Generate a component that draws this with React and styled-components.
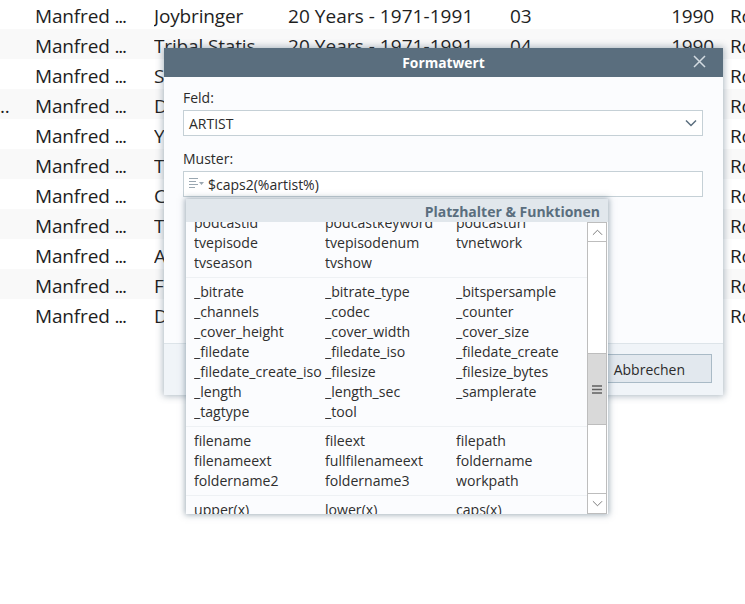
import React from 'react'
import styled, { createGlobalStyle } from 'styled-components'

const GlobalStyle = createGlobalStyle`
html, body {
  margin: 0;
  padding: 0;
  background: #FFFFFF;
  overflow: hidden;
}
body {
  width: 745px;
  height: 604px;
  position: relative;
  font-family: "Open Sans", "Noto Sans", sans-serif;
}
`

const Table = styled.div`
margin-top: -1px;
width: 745px;
overflow: hidden;
`
const Row = styled.div`
display: grid;
grid-template-columns: 35px 119px 134px 222px 100px 104px 31px;
height: 30px;
align-items: center;
font-size: 19px;
letter-spacing: -0.15px;
color: #1E1E1E;
background: ${p => (p.$striped ? '#F9F9F9' : '#FFFFFF')};
`
const Cell = styled.div`
white-space: nowrap;
overflow: hidden;
padding-top: 3px;
text-align: ${p => (p.$right ? 'right' : 'left')};
`
const AlbumCell = styled(Cell)`
letter-spacing: 0.05px;
`
const GenreCell = styled(Cell)`
padding-left: 16px;
`
const Dots = styled.span`
letter-spacing: -1.3px;
`

const Dialog = styled.div`
position: absolute;
left: 164px;
top: 48px;
width: 559px;
height: 347px;
display: flex;
flex-direction: column;
background: #FBFCFE;
box-shadow: 0 0 7px 1px rgba(70, 95, 115, 0.45);
`
const TitleBar = styled.div`
height: 29px;
flex: none;
display: flex;
align-items: center;
justify-content: center;
position: relative;
background: #5A6E7E;
color: #FFFFFF;
font-size: 13.8px;
font-weight: 700;
`
const CloseIcon = styled.svg`
position: absolute;
right: 17px;
top: 7px;
width: 13px;
height: 13px;
stroke: #D3DBE1;
stroke-width: 1.5;
fill: none;
`
const Body = styled.div`
flex: 1;
padding: 11px 20px 0 19px;
display: flex;
flex-direction: column;
`
const Label = styled.div`
height: 22px;
font-size: 14px;
line-height: 20px;
color: #2B2B2B;
`
const Field = styled.div`
height: 26px;
box-sizing: border-box;
border: 1px solid #C5D0D6;
background: #FFFFFF;
display: flex;
align-items: center;
justify-content: space-between;
padding: 0 5px;
margin-bottom: 13px;
font-size: 14px;
color: #2B2B2B;
`
const Pattern = styled.div`
display: flex;
align-items: center;
gap: 4px;
`
const Footer = styled.div`
height: 52px;
flex: none;
box-sizing: border-box;
border-top: 1px solid #DDE4E9;
background: #F0F4F8;
display: flex;
justify-content: flex-end;
padding: 10px 11px 0 0;
`
const Button = styled.div`
width: 112px;
height: 29px;
box-sizing: border-box;
border: 1px solid #A9BAC6;
background: #E2E8EE;
font-size: 14px;
color: #2B2B2B;
display: flex;
align-items: center;
justify-content: flex-end;
padding: 1px 26px 0 0;
`

const Popup = styled.div`
position: absolute;
left: 22px;
top: 151px;
width: 422px;
height: 315px;
display: flex;
flex-direction: column;
background: #FBFCFE;
box-shadow: 0 0 6px 1px rgba(70, 95, 115, 0.5);
`
const PopupHeader = styled.div`
height: 23px;
flex: none;
background: #E1E7EC;
color: #5A6E7E;
font-size: 14px;
font-weight: 700;
text-align: right;
line-height: 26px;
padding-right: 8px;
position: relative;
z-index: 1;
`
const PopupBody = styled.div`
flex: 1;
min-height: 0;
display: flex;
padding-right: 1px;
`
const ListViewport = styled.div`
width: 401px;
overflow: hidden;
`
const List = styled.div`
margin-top: -13px;
`
const Section = styled.div`
display: grid;
grid-template-columns: repeat(3, 131px);
grid-auto-rows: 20px;
align-items: center;
padding: 3px 8px 5px;
border-bottom: 1px solid #EEF1F4;
font-size: 14.1px;
color: #2F2F2F;
`
const Item = styled.div`
white-space: nowrap;
overflow: hidden;
padding-right: 3px;
`
const Scrollbar = styled.div`
width: 20px;
box-sizing: border-box;
border: 1px solid #BDBDBD;
border-top: none;
background: #FFFFFF;
display: flex;
flex-direction: column;
`
const ScrollButton = styled.div`
height: 20px;
flex: none;
box-sizing: border-box;
display: flex;
align-items: center;
justify-content: center;
border-top: 1px solid #BDBDBD;
border-bottom: ${p => (p.$down ? 'none' : '1px solid #BDBDBD')};
`
const ScrollTrack = styled.div`
flex: 1;
padding-top: 111px;
`
const ScrollThumb = styled.div`
height: 72px;
box-sizing: border-box;
background: #D9D9D9;
border-top: 1px solid #BDBDBD;
border-bottom: 1px solid #BDBDBD;
display: flex;
align-items: center;
justify-content: center;
`

const rows = [
  ['', 'Joybringer', '03'],
  ['', 'Tribal Statis', '04'],
  ['', 'Stranded', '05'],
  ['..', 'Davy', '06'],
  ['', 'You Angel', '07'],
  ['', 'The Mighty', '08'],
  ['', 'California', '09'],
  ['', 'Tiny', '10'],
  ['', 'Angels', '11'],
  ['', 'For You', '12'],
  ['', 'Don', '13'],
]

const sections = [
  ['podcastid', 'podcastkeyword', 'podcasturl', 'tvepisode', 'tvepisodenum', 'tvnetwork', 'tvseason', 'tvshow'],
  ['_bitrate', '_bitrate_type', '_bitspersample', '_channels', '_codec', '_counter', '_cover_height', '_cover_width', '_cover_size', '_filedate', '_filedate_iso', '_filedate_create', '_filedate_create_iso', '_filesize', '_filesize_bytes', '_length', '_length_sec', '_samplerate', '_tagtype', '_tool'],
  ['filename', 'fileext', 'filepath', 'filenameext', 'fullfilenameext', 'foldername', 'foldername2', 'foldername3', 'workpath'],
  ['upper(x)', 'lower(x)', 'caps(x)', 'caps2(x)', 'left(x,n)', 'right(x,n)'],
]

const Chevron = ({ up, size = 12, color = '#5A6E7E', width = 1.5 }) => (
  <svg width={size} height={size} viewBox="0 0 12 12" fill="none" stroke={color} strokeWidth={width}>
    <path d={up ? 'M1 8.5 L6 3.5 L11 8.5' : 'M1 3.5 L6 8.5 L11 3.5'} />
  </svg>
)

const PatternIcon = () => (
  <svg width="15" height="12" viewBox="0 0 15 12" fill="none" stroke="#9AA7B1" strokeWidth="1">
    <path d="M0 .5 H9 M0 3.5 H7 M0 6.5 H9 M0 9.5 H6" />
    <path d="M10 4 H15 L12.5 7 Z" fill="#9AA7B1" stroke="none" />
  </svg>
)

const App = () => (
  <>
    <GlobalStyle />
    <Table>
      {rows.map(([lead, title, track], i) => (
        <Row key={track} $striped={i % 2 === 1}>
          <Cell>{lead}</Cell>
          <Cell>Manfred <Dots>...</Dots></Cell>
          <Cell>{title}</Cell>
          <AlbumCell>20 Years - 1971-1991</AlbumCell>
          <Cell>{track}</Cell>
          <Cell $right>1990</Cell>
          <GenreCell>Rock</GenreCell>
        </Row>
      ))}
    </Table>

    <Dialog>
      <TitleBar>
        Formatwert
        <CloseIcon viewBox="0 0 13 13">
          <path d="M1 1 L12 12 M12 1 L1 12" />
        </CloseIcon>
      </TitleBar>
      <Body>
        <Label>Feld:</Label>
        <Field>
          ARTIST
          <Chevron />
        </Field>
        <Label>Muster:</Label>
        <Field>
          <Pattern>
            <PatternIcon />
            $caps2(%artist%)
          </Pattern>
        </Field>
      </Body>
      <Footer>
        <Button>Abbrechen</Button>
      </Footer>
      <Popup>
        <PopupHeader>Platzhalter &amp; Funktionen</PopupHeader>
        <PopupBody>
          <ListViewport>
            <List>
              {sections.map(items => (
                <Section key={items[0]}>
                  {items.map(item => (
                    <Item key={item}>{item}</Item>
                  ))}
                </Section>
              ))}
            </List>
          </ListViewport>
          <Scrollbar>
            <ScrollButton>
              <Chevron up size={11} color="#707070" width={1} />
            </ScrollButton>
            <ScrollTrack>
              <ScrollThumb>
                <svg width="10" height="9" viewBox="0 0 10 9" stroke="#606060" strokeWidth="1.4">
                  <path d="M0 1 H10 M0 4.5 H10 M0 8 H10" />
                </svg>
              </ScrollThumb>
            </ScrollTrack>
            <ScrollButton $down>
              <Chevron size={11} color="#707070" width={1} />
            </ScrollButton>
          </Scrollbar>
        </PopupBody>
      </Popup>
    </Dialog>
  </>
)

export default App
